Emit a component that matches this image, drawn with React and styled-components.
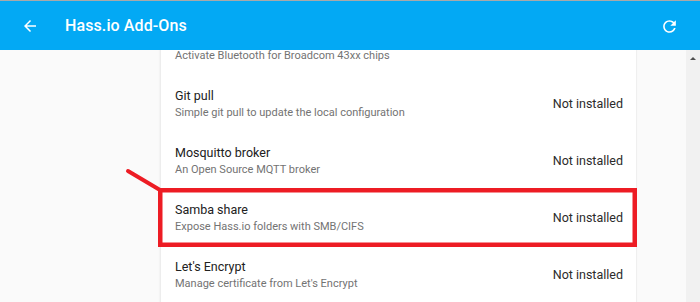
import React from "react";
import styled, { createGlobalStyle } from "styled-components";

const GlobalStyle = createGlobalStyle`
  html, body { margin: 0; padding: 0; overflow: hidden; }
  body { font-family: Roboto, "Noto Sans", Arial, sans-serif; background: #fafafa; }
`;

const Page = styled.div`
  position: relative;
  width: 700px;
  height: 302px;
  display: flex;
  flex-direction: column;
  overflow: hidden;
`;

const Header = styled.header`
  flex: 0 0 auto;
  height: 49px;
  border-top: 1px solid #a9a9a9;
  background: #03a9f4;
  color: #fff;
  display: flex;
  align-items: center;
  padding-left: 21px;
  padding-right: 21px;
  position: relative;
  z-index: 1;
`;

const IconButton = styled.span`
  display: flex;
  align-items: center;
  justify-content: center;
  width: ${(p) => p.$size}px;
  height: ${(p) => p.$size}px;
  margin-top: 1px;
  svg { width: 100%; height: 100%; fill: #fff; display: block; }
`;

const Title = styled.h1`
  margin: 0 0 0 26px;
  flex: 1;
  font-size: 16px;
  font-weight: 500;
  letter-spacing: 0.1px;
  line-height: 20px;
`;

const Body = styled.div`
  flex: 1;
  display: flex;
  min-height: 0;
`;

const Content = styled.main`
  flex: 1;
  background: #fafafa;
  overflow: hidden;
  padding: 0 50px 0 161px;
`;

const Card = styled.section`
  width: 475px;
  margin-top: -31px;
  background: #fff;
  box-shadow: -1px 0 2px rgba(0, 0, 0, 0.08), 1px 0 1px rgba(0, 0, 0, 0.04);
`;

const Row = styled.div`
  height: 57px;
  box-sizing: border-box;
  display: flex;
  align-items: center;
  justify-content: space-between;
  padding: 0 13px 0 14px;
`;

const Info = styled.div`
  display: flex;
  flex-direction: column;
  margin-top: -1px;
`;

const ItemTitle = styled.div`
  font-size: 12.5px;
  line-height: 17px;
  color: #212121;
`;

const ItemDesc = styled.div`
  font-size: 11px;
  line-height: 17px;
  color: #737373;
`;

const Status = styled.div`
  font-size: 12.5px;
  color: #2b2b2b;
  margin-top: -3px;
`;

const Scrollbar = styled.div`
  width: 14px;
  background: #f1f1f1;
  display: flex;
  flex-direction: column;
  align-items: center;
  padding-top: 7px;
`;

const ArrowUp = styled.span`
  width: 0;
  height: 0;
  border-left: 3px solid transparent;
  border-right: 3px solid transparent;
  border-bottom: 3px solid #505050;
`;

const Annotation = styled.svg`
  position: absolute;
  left: 0;
  top: 0;
  width: 700px;
  height: 302px;
  pointer-events: none;
  z-index: 2;
`;

const items = [
  { title: "", desc: "Activate Bluetooth for Broadcom 43xx chips", status: "" },
  { title: "Git pull", desc: "Simple git pull to update the local configuration", status: "Not installed" },
  { title: "Mosquitto broker", desc: "An Open Source MQTT broker", status: "Not installed" },
  { title: "Samba share", desc: "Expose Hass.io folders with SMB/CIFS", status: "Not installed" },
  { title: "Let's Encrypt", desc: "Manage certificate from Let's Encrypt", status: "Not installed" },
];

export default function App() {
  return (
    <>
      <GlobalStyle />
      <Page>
        <Header>
          <IconButton $size={18}>
            <svg viewBox="0 0 24 24">
              <path d="M20 11H7.83l5.59-5.59L12 4l-8 8 8 8 1.41-1.41L7.83 13H20v-2z" />
            </svg>
          </IconButton>
          <Title>Hass.io Add-Ons</Title>
          <IconButton $size={19}>
            <svg viewBox="0 0 24 24">
              <path d="M17.65 6.35C16.2 4.9 14.21 4 12 4c-4.42 0-7.99 3.58-7.99 8s3.57 8 7.99 8c3.73 0 6.84-2.55 7.73-6h-2.08c-.82 2.33-3.04 4-5.65 4-3.31 0-6-2.690-6-6s2.69-6 6-6c1.66 0 3.14.69 4.22 1.78L13 11h7V4l-2.35 2.35z" />
            </svg>
          </IconButton>
        </Header>
        <Body>
          <Content>
            <Card>
              {items.map((it) => (
                <Row key={it.desc}>
                  <Info>
                    <ItemTitle>{it.title || "\u00a0"}</ItemTitle>
                    <ItemDesc>{it.desc}</ItemDesc>
                  </Info>
                  {it.status && <Status>{it.status}</Status>}
                </Row>
              ))}
            </Card>
          </Content>
          <Scrollbar>
            <ArrowUp />
          </Scrollbar>
        </Body>
        <Annotation viewBox="0 0 700 302">
          <line x1="128" y1="171" x2="160" y2="190" stroke="#ed1c24" strokeWidth="4" strokeLinecap="round" />
          <rect x="160.25" y="190.25" width="474.5" height="54.5" fill="none" stroke="#ed1c24" strokeWidth="4.5" />
        </Annotation>
      </Page>
    </>
  );
}
